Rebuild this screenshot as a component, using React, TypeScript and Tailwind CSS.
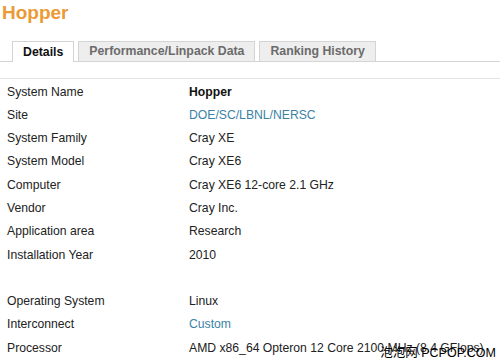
const rows: [string, string, "bold" | "link" | "plain"][] = [
  ["System Name", "Hopper", "bold"],
  ["Site", "DOE/SC/LBNL/NERSC", "link"],
  ["System Family", "Cray XE", "plain"],
  ["System Model", "Cray XE6", "plain"],
  ["Computer", "Cray XE6 12-core 2.1 GHz", "plain"],
  ["Vendor", "Cray Inc.", "plain"],
  ["Application area", "Research", "plain"],
  ["Installation Year", "2010", "plain"],
  ["", "", "plain"],
  ["Operating System", "Linux", "plain"],
  ["Interconnect", "Custom", "link"],
  ["Processor", "AMD x86_64 Opteron 12 Core 2100 MHz (8.4 GFlops)", "plain"],
];

export default function App() {
  return (
    <div
      className="relative w-[500px] h-[363px] overflow-hidden bg-white text-[#222]"
      style={{ fontFamily: '"Liberation Sans", Arial, sans-serif' }}
    >
      <h1 className="pl-[2px] pt-[1px] text-[19px] leading-[24px] font-bold text-[#eb9a35]">
        Hopper
      </h1>

      {/* tabs */}
      <div className="mt-[17px] flex items-end gap-[4px] pl-[12px] border-b border-[#d4d4d4] h-[20px]">
        <div className="h-[21px] px-[10px] bg-white border border-b-0 border-[#d4d4d4] text-[12.3px] font-bold leading-[20px] text-[#111] -mb-px">
          Details
        </div>
        <div className="h-[20px] px-[10px] bg-[#eeeeee] border border-b-0 border-[#d4d4d4] text-[12.3px] font-bold leading-[19px] text-[#6b6b6b]">
          Performance/Linpack Data
        </div>
        <div className="h-[20px] px-[10px] bg-[#eeeeee] border border-b-0 border-[#d4d4d4] text-[12.3px] font-bold leading-[19px] text-[#6b6b6b]">
          Ranking History
        </div>
      </div>

      <div className="mt-[16px] pt-[1px] border-t border-[#e2e2e2]">
        {rows.map(([label, value, kind], i) => (
          <div key={i} className="flex h-[23.3px] items-center text-[12.2px] whitespace-nowrap">
            <div className="w-[189px] pl-[7px]">{label}</div>
            <div
              className={
                kind === "bold"
                  ? "font-bold text-[#111]"
                  : kind === "link"
                    ? "text-[#3b82a6]"
                    : ""
              }
            >
              {value}
            </div>
          </div>
        ))}
      </div>

      {/* watermark */}
      <div
        className="absolute right-[4px] bottom-[2px] text-[12.5px] leading-[16px] text-black"
        style={{ fontFamily: '"Liberation Sans", "Noto Sans CJK SC", sans-serif' }}
      >
        泡泡网 PCPOP.COM
      </div>
    </div>
  );
}
